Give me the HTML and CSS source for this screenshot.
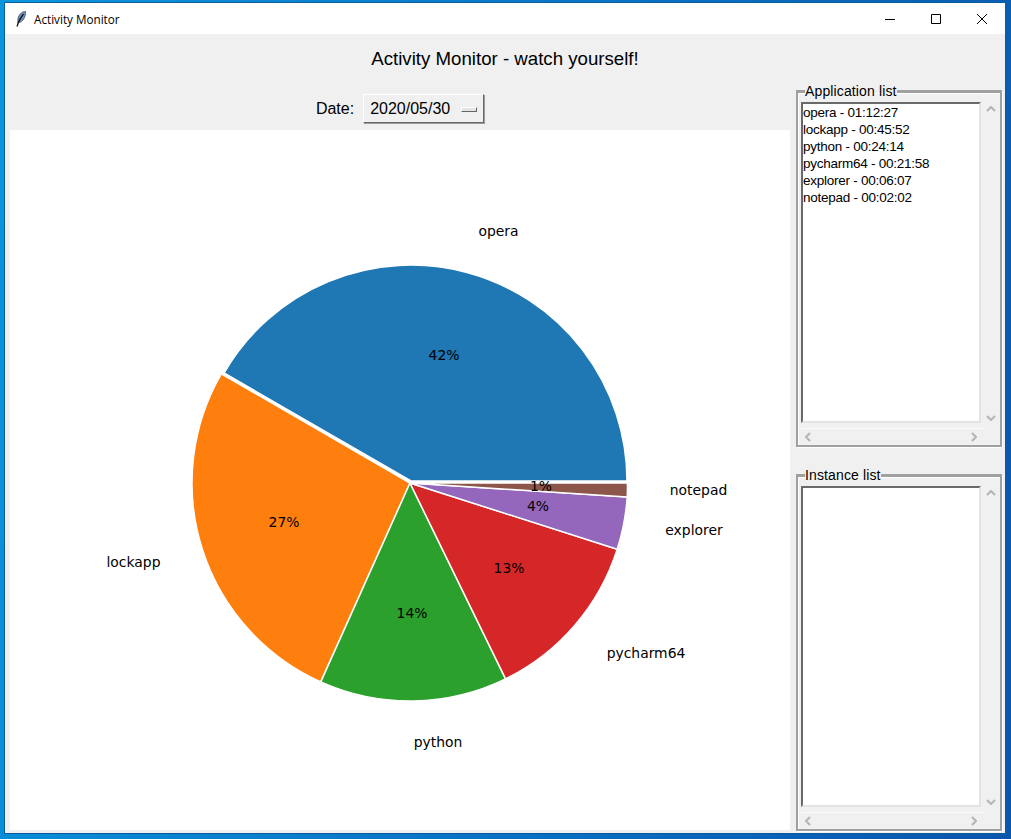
FILE: index.html
```html
<!DOCTYPE html>
<html lang="en">
<head>
    <meta charset="UTF-8">
    <title>Activity Monitor</title>
    <link rel="stylesheet" href="styles.css">
</head>
<body>

<div class="window">
    <div class="titlebar">
        <svg class="app-icon" width="11" height="16" viewBox="0 0 11 16">
            <path d="M9.500 0.500C6 0.500 2.800 3.500 2 7.500L1.800 12L4.500 11C7.500 9.500 10 5 9.500 0.500Z" fill="#6f93bd" stroke="#2c3e55" stroke-width="0.7"/>
            <path d="M7.500 3C5.500 5.500 3.500 9 2.400 11.500L1 15.500" fill="none" stroke="#10141c" stroke-width="1.3"/>
        </svg>
        <span class="app-name">Activity Monitor</span>
        <div class="controls">
            <div class="ctl"><svg width="12" height="12" viewBox="0 0 12 12"><path d="M1 6.500H11" stroke="#000" fill="none"/></svg></div>
            <div class="ctl"><svg width="12" height="12" viewBox="0 0 12 12"><path d="M1.500 1.500H10.500V10.500H1.500Z" stroke="#000" fill="none"/></svg></div>
            <div class="ctl"><svg width="12" height="12" viewBox="0 0 12 12"><path d="M1 1L11 11M11 1L1 11" stroke="#000" fill="none"/></svg></div>
        </div>
    </div>

    <h1 class="heading">Activity Monitor - watch yourself!</h1>

    <div class="main">
        <div class="left">
            <div class="date-row">
                <label class="date-label">Date:</label>
                <div class="menubutton">2020/05/30<span class="indicator"></span></div>
            </div>
            <svg class="chart" width="780" height="700" viewBox="0 0 780 700">
                <g stroke="#fff" stroke-width="1.5" stroke-linejoin="round">
                    <path d="M401 351L617 351A216 216 0 0 0 214 243Z" fill="#1f77b4"/>
                    <path d="M400 353L211.300 243.800A218 218 0 0 0 310.800 551.900Z" fill="#ff7f0e"/>
                    <path d="M400 353L310.800 551.900A218 218 0 0 0 495.600 548.900Z" fill="#2ca02c"/>
                    <path d="M400 353L495.600 548.900A218 218 0 0 0 607.200 419.200Z" fill="#d62728"/>
                    <path d="M400 353L607.200 419.200A218 218 0 0 0 617.200 367Z" fill="#9467bd"/>
                    <path d="M400 353L617.200 367A218 218 0 0 0 617.400 353Z" fill="#8c564b"/>
                </g>
                <g class="pie-text">
                    <text x="488.500" y="106">opera</text>
                    <text x="434" y="230">42%</text>
                    <text x="123.500" y="437">lockapp</text>
                    <text x="274" y="397">27%</text>
                    <text x="428" y="617">python</text>
                    <text x="402" y="488">14%</text>
                    <text x="636" y="528">pycharm64</text>
                    <text x="499" y="443">13%</text>
                    <text x="684" y="405">explorer</text>
                    <text x="528" y="381">4%</text>
                    <text x="688.500" y="365">notepad</text>
                    <text x="531" y="361">1%</text>
                </g>
            </svg>
        </div>

        <div class="right">
            <fieldset class="frame">
                <legend>Application list</legend>
                <div class="list-grid">
                    <div class="listbox">
                        <div>opera - 01:12:27</div>
                        <div>lockapp - 00:45:52</div>
                        <div>python - 00:24:14</div>
                        <div>pycharm64 - 00:21:58</div>
                        <div>explorer - 00:06:07</div>
                        <div>notepad - 00:02:02</div>
                    </div>
                    <div class="vbar">
                        <svg width="10" height="6" viewBox="0 0 10 6"><path d="M1 5L5 1L9 5" class="chev"/></svg>
                        <svg width="10" height="6" viewBox="0 0 10 6"><path d="M1 1L5 5L9 1" class="chev"/></svg>
                    </div>
                    <div class="hbar">
                        <svg width="6" height="10" viewBox="0 0 6 10"><path d="M5 1L1 5L5 9" class="chev"/></svg>
                        <svg width="6" height="10" viewBox="0 0 6 10"><path d="M1 1L5 5L1 9" class="chev"/></svg>
                    </div>
                </div>
            </fieldset>

            <fieldset class="frame">
                <legend>Instance list</legend>
                <div class="list-grid">
                    <div class="listbox"></div>
                    <div class="vbar">
                        <svg width="10" height="6" viewBox="0 0 10 6"><path d="M1 5L5 1L9 5" class="chev"/></svg>
                        <svg width="10" height="6" viewBox="0 0 10 6"><path d="M1 1L5 5L9 1" class="chev"/></svg>
                    </div>
                    <div class="hbar">
                        <svg width="6" height="10" viewBox="0 0 6 10"><path d="M5 1L1 5L5 9" class="chev"/></svg>
                        <svg width="6" height="10" viewBox="0 0 6 10"><path d="M1 1L5 5L1 9" class="chev"/></svg>
                    </div>
                </div>
            </fieldset>
        </div>
    </div>
</div>

</body>
</html>
```

FILE: styles.css
```css
html, body {
    margin: 0;
    height: 100%;
}
body {
    box-sizing: border-box;
    height: 839px;
    padding: 2px 5px 5px 4px;
    overflow: hidden;
    background: linear-gradient(100deg, #0a96dc 0%, #0a78c8 45%, #0a56ac 100%);
    font-family: "Liberation Sans", Arial, sans-serif;
}
.window {
    box-sizing: border-box;
    height: 832px;
    border: 1px solid #0b5c9e;
    background: #f0f0f0;
    color: #000;
}
.titlebar {
    display: flex;
    align-items: center;
    height: 31px;
    background: #fff;
}
.app-icon {
    margin-left: 11px;
}
.app-name {
    margin-left: 7px;
    font-family: "Open Sans", sans-serif;
    font-size: 11.7px;
}
.controls {
    display: flex;
    margin-left: auto;
    height: 100%;
}
.ctl {
    display: flex;
    align-items: center;
    justify-content: center;
    width: 46px;
}
.heading {
    margin: 0;
    height: 48px;
    line-height: 49px;
    text-align: center;
    font-size: 18.67px;
    font-weight: normal;
}
.main {
    display: flex;
}
.left {
    width: 785px;
    padding-left: 5px;
    box-sizing: border-box;
}
.date-row {
    display: flex;
    align-items: center;
    justify-content: center;
    gap: 9px;
    height: 48px;
    padding-top: 4px;
    box-sizing: border-box;
    font-size: 16px;
}
.date-label {
    margin-top: 2px;
}
.menubutton {
    display: flex;
    align-items: center;
    box-sizing: border-box;
    width: 121px;
    height: 29px;
    padding: 2px 0 0 6px;
    background: #f0f0f0;
    border: 1px solid;
    border-color: #fff #696969 #696969 #fff;
    box-shadow: 1px 1px 0 #9a9a9a;
}
.indicator {
    box-sizing: border-box;
    width: 16px;
    height: 5px;
    margin-left: 11px;
    background: #e4e4e4;
    border: 1px solid;
    border-color: #fff #666 #666 #fff;
}
.chart {
    display: block;
    background: #fff;
}
.pie-text text {
    font-family: "DejaVu Sans", sans-serif;
    font-size: 13.9px;
    fill: #000;
    text-anchor: middle;
}
.right {
    display: flex;
    flex-direction: column;
    gap: 20px;
    width: 212px;
    padding: 1px 0 0 6px;
    box-sizing: border-box;
}
.frame {
    box-sizing: border-box;
    width: 206px;
    margin: 0;
    padding: 3px 0 0 3px;
    min-width: 0;
    border: 2px solid #a0a0a0;
    border-top-width: 3px;
    box-shadow: 1px 1px 0 #fff, inset 1px 1px 0 #fff;
}
.frame legend {
    margin-left: 4px;
    padding: 0;
    line-height: 16px;
    font-size: 14px;
    letter-spacing: 0.13px;
}
.list-grid {
    display: grid;
    grid-template-columns: 180px 18px;
    grid-template-rows: 321px 22px;
}
.listbox {
    box-sizing: border-box;
    background: #fff;
    border: 2px solid;
    border-color: #696969 #e3e3e3 #e3e3e3 #696969;
    font-size: 13.5px;
    line-height: 17px;
    letter-spacing: -0.25px;
}
.vbar {
    display: flex;
    flex-direction: column;
    align-items: center;
    justify-content: space-between;
    padding: 4px 0 2px 2px;
}
.hbar {
    grid-column: 1 / span 2;
    display: flex;
    align-items: center;
    justify-content: space-between;
    margin: 5px 15px 0 0;
    padding: 0 7px 0 4px;
    border-top: 1px solid #fafafa;
}
.chev {
    fill: none;
    stroke: #b4b4b4;
    stroke-width: 2;
}
```
